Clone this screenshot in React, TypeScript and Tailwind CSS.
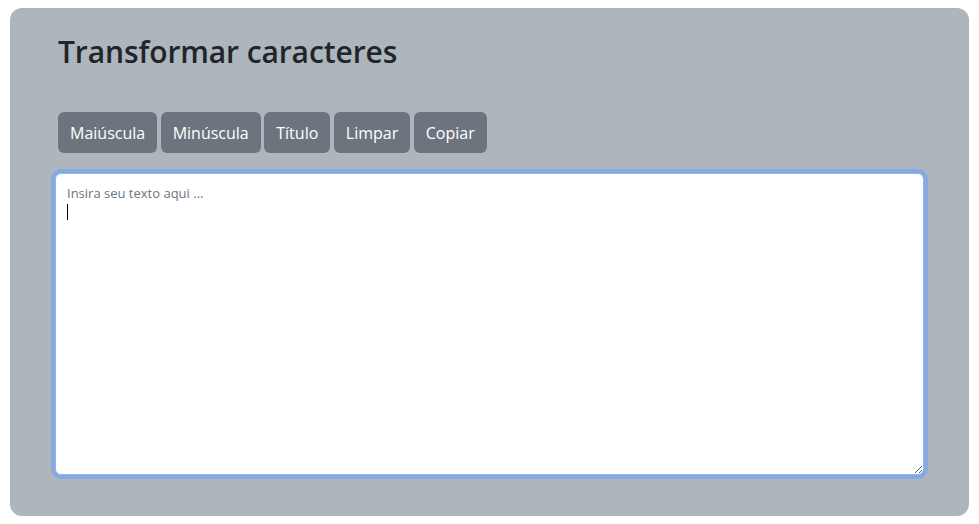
import React, {useState} from 'react';

const buttons = ['Maiúscula', 'Minúscula', 'Título', 'Limpar', 'Copiar'];

const App = () => {
  const [text, setText] = useState('');

  return (
    <div
      className="min-h-screen bg-white px-[10px] pt-[8px]"
      style={{fontFamily: '"Open Sans", "Noto Sans", sans-serif'}}>
      <div className="flex h-[508px] flex-col rounded-[12px] bg-[#adb5bd] px-[45px] pt-[20px]">
        <h1 className="pl-[3px] text-[30px] font-semibold leading-[48px] tracking-[-0.1px] text-[#212529]">
          Transformar caracteres
        </h1>

        <div className="mt-[36px] flex flex-row gap-[3.5px] pl-[3px]">
          {buttons.map(label => (
            <button
              key={label}
              className="h-[41px] rounded-[6px] bg-[#6c757d] px-[12px] text-[16px] text-white">
              {label}
            </button>
          ))}
        </div>

        <div className="relative mt-[20px]">
          <span className="absolute left-[12px] top-[11px] text-[13px] text-[#6c757d]">
            Insira seu texto aqui ...
          </span>
          {/* caret */}
          <span className="absolute left-[12px] top-[31px] h-[16px] w-px bg-black" />
          <textarea
            value={text}
            onChange={e => setText(e.target.value)}
            className="block h-[302px] w-full rounded-[6px] border border-[#86b7fe] bg-white px-[11px] pt-[30px] text-[16px] caret-transparent shadow-[0_0_0_4px_#87a9dc] outline-none"
          />
        </div>
      </div>
    </div>
  );
};

export default App;
